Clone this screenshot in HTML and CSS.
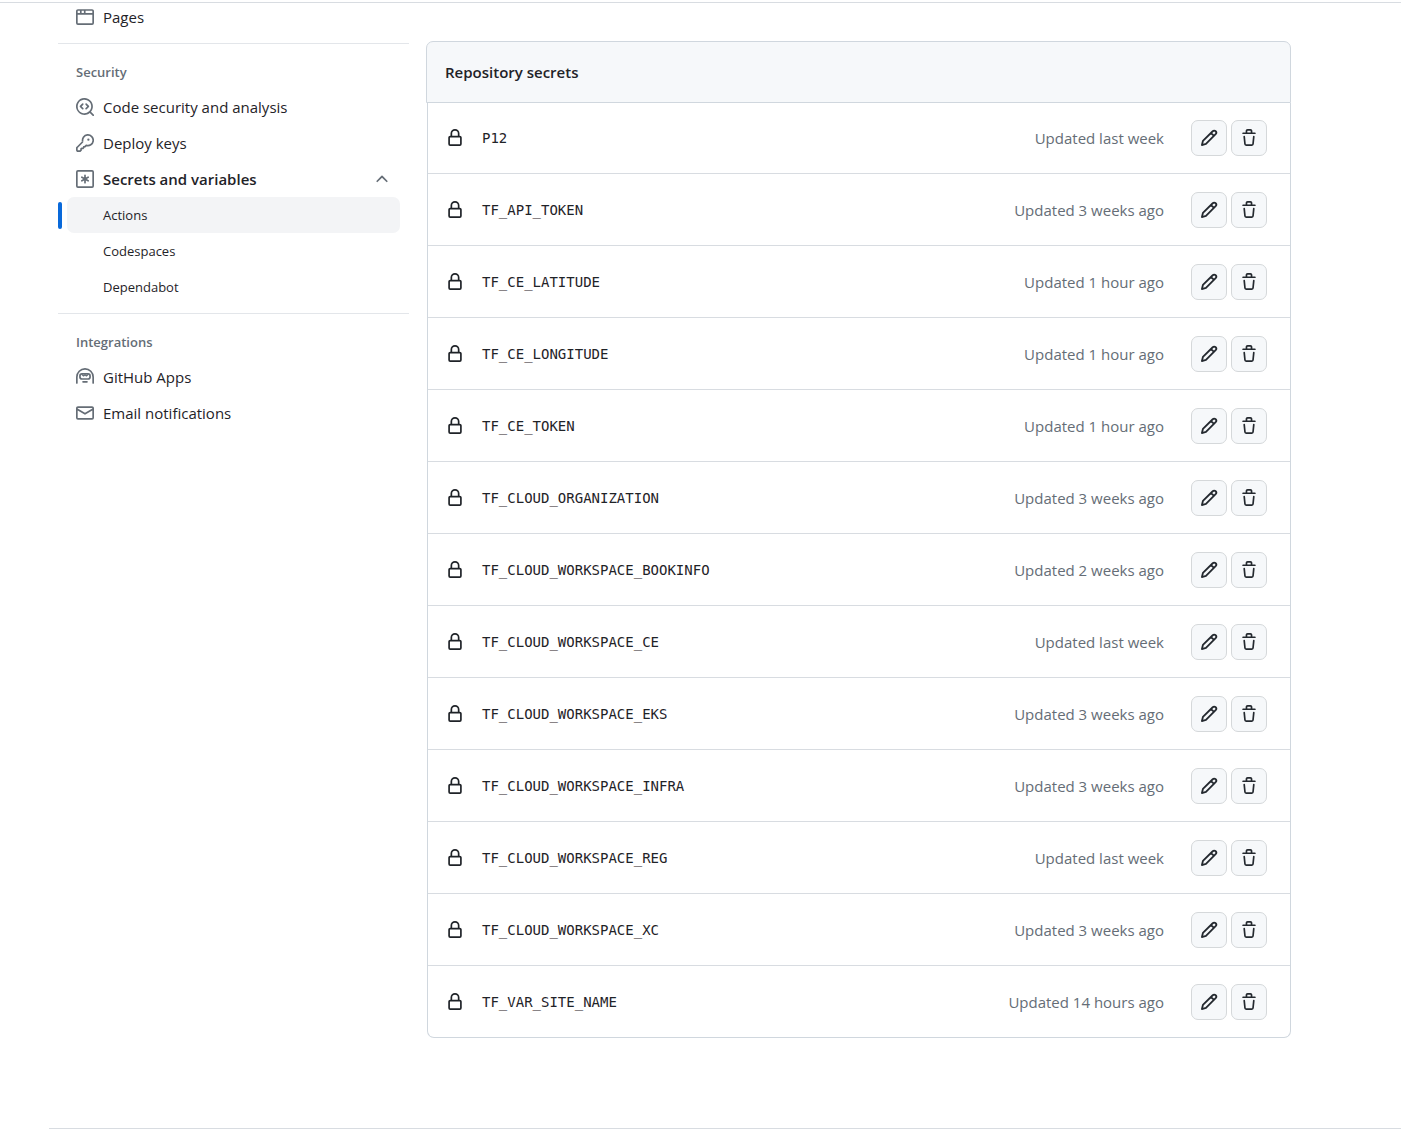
FILE: index.html
```html
<!DOCTYPE html>
<html lang="en">
<head>
<meta charset="utf-8">
<title>Actions secrets</title>
<link rel="stylesheet" href="styles.css">
</head>
<body>
<svg class="sprite" aria-hidden="true">
  <symbol id="browser" viewBox="0 0 16 16"><path d="M0 2.75C0 1.784.784 1 1.75 1h12.5c.966 0 1.75.784 1.75 1.75v10.5A1.75 1.75 0 0 1 14.25 15H1.75A1.75 1.75 0 0 1 0 13.25ZM14.5 6h-13v7.25c0 .138.112.25.25.25h12.5a.25.25 0 0 0 .25-.25Zm-6-3.5v2h6V2.75a.25.25 0 0 0-.25-.25ZM5 2.5v2h2v-2Zm-3.25 0a.25.25 0 0 0-.25.25V4.5h2v-2Z"/></symbol>
  <symbol id="codescan" viewBox="0 0 16 16"><path d="M8.47 4.97a.75.75 0 0 0 0 1.06L9.94 7.5 8.47 8.97a.75.75 0 1 0 1.06 1.06l2-2a.75.75 0 0 0 0-1.06l-2-2a.75.75 0 0 0-1.06 0ZM6.53 6.03a.75.75 0 0 0-1.06-1.06l-2 2a.75.75 0 0 0 0 1.06l2 2a.75.75 0 1 0 1.06-1.06L5.06 7.5l1.47-1.47Z"/><path d="M12.246 13.307a7.501 7.501 0 1 1 1.06-1.06l2.474 2.473a.749.749 0 0 1-.326 1.275.749.749 0 0 1-.734-.215ZM1.5 7.5a6.002 6.002 0 0 0 3.608 5.504 6.002 6.002 0 0 0 6.486-1.117.748.748 0 0 1 .292-.293A6 6 0 1 0 1.5 7.5Z"/></symbol>
  <symbol id="key" viewBox="0 0 16 16"><path d="M6 6.9L.95 12a.6.6 0 0 0-.2.5v1.75a1 1 0 0 0 1 1h1.9l.85-.85v-1.1l.6-.6h1.1l.7-.7v-.6l.5-.1h.6l1.1-1.2A4.75 4.75 0 1 0 6 6.9" fill="none" stroke="currentColor" stroke-width="1.5" stroke-linejoin="round"/><circle cx="11" cy="5" r="1"/></symbol>
  <symbol id="asterisk" viewBox="0 0 16 16"><g fill="none" stroke="currentColor" stroke-width="1.5" stroke-linecap="round"><rect x=".75" y=".75" width="14.5" height="14.5" rx="1"/><path d="M8 4.75v6.5M5.2 6.4l5.6 3.2M10.8 6.4L5.2 9.6"/></g></symbol>
  <symbol id="chevron" viewBox="0 0 16 16"><path d="M3.22 10.53a.749.749 0 0 1 0-1.06l4.25-4.25a.749.749 0 0 1 1.06 0l4.25 4.25a.749.749 0 1 1-1.06 1.06L8 6.811 4.28 10.53a.749.749 0 0 1-1.06 0Z"/></symbol>
  <symbol id="hubot" viewBox="0 0 16 16"><g fill="none" stroke="currentColor" stroke-width="1.5" stroke-linecap="round" stroke-linejoin="round"><path d="M.75 13.25V8a7.25 7.25 0 0 1 14.5 0v5.25M6.25 12.25h3.5"/><rect x="3.5" y="5.25" width="9" height="4.5" rx="1.75"/><path d="M5.5 6l1.25 1.1L8 6l1.25 1.1L10.5 6" stroke-width="1"/></g></symbol>
  <symbol id="mail" viewBox="0 0 16 16"><path d="M1.75 2h12.5c.966 0 1.75.784 1.75 1.75v8.5A1.75 1.75 0 0 1 14.25 14H1.75A1.75 1.75 0 0 1 0 12.25v-8.5C0 2.784.784 2 1.75 2ZM1.5 12.251c0 .138.112.25.25.25h12.5a.25.25 0 0 0 .25-.25V5.809L8.38 9.397a.75.75 0 0 1-.76 0L1.5 5.809v6.442Zm13-8.181v-.32a.25.25 0 0 0-.25-.25H1.75a.25.25 0 0 0-.25.25v.32L8 7.88Z"/></symbol>
  <symbol id="lock" viewBox="0 0 16 16"><path d="M4 4a4 4 0 0 1 8 0v2h.25c.966 0 1.75.784 1.75 1.75v5.5A1.75 1.75 0 0 1 12.25 15h-8.5A1.75 1.75 0 0 1 2 13.25v-5.5C2 6.784 2.784 6 3.75 6H4Zm8.25 3.5h-8.5a.25.25 0 0 0-.25.25v5.5c0 .138.112.25.25.25h8.5a.25.25 0 0 0 .25-.25v-5.5a.25.25 0 0 0-.25-.25ZM10.5 6V4a2.5 2.5 0 1 0-5 0v2Z"/></symbol>
  <symbol id="pencil" viewBox="0 0 16 16"><path d="M1.7 14.3l.9-3.7 8.7-8.6a1.8 1.8 0 0 1 2.6 2.6L5.3 13.3ZM9.9 3.6l2.5 2.5" fill="none" stroke="currentColor" stroke-width="1.6" stroke-linejoin="round"/></symbol>
  <symbol id="trash" viewBox="0 0 16 16"><path d="M11 1.75V3h2.25a.75.75 0 0 1 0 1.5H2.75a.75.75 0 0 1 0-1.5H5V1.75C5 .784 5.784 0 6.75 0h2.5C10.216 0 11 .784 11 1.75ZM4.496 6.675l.66 6.6a.25.25 0 0 0 .249.225h5.19a.25.25 0 0 0 .249-.225l.66-6.6a.75.75 0 0 1 1.492.149l-.66 6.6A1.748 1.748 0 0 1 10.595 15h-5.19a1.75 1.75 0 0 1-1.741-1.575l-.66-6.6a.75.75 0 1 1 1.492-.15ZM6.5 1.75V3h3V1.75a.25.25 0 0 0-.25-.25h-2.5a.25.25 0 0 0-.25.25Z"/></symbol>
</svg>
<div class="page">
  <nav class="sidebar" aria-label="Settings">
    <ul class="nav-list">
      <li><a class="nav-item" href="#"><svg class="icon"><use href="#browser"/></svg>Pages</a></li>
    </ul>
    <h2 class="nav-heading">Security</h2>
    <ul class="nav-list">
      <li><a class="nav-item" href="#"><svg class="icon"><use href="#codescan"/></svg>Code security and analysis</a></li>
      <li><a class="nav-item" href="#"><svg class="icon"><use href="#key"/></svg>Deploy keys</a></li>
      <li>
        <button class="nav-item nav-toggle" type="button" aria-expanded="true"><svg class="icon"><use href="#asterisk"/></svg>Secrets and variables<svg class="icon chevron"><use href="#chevron"/></svg></button>
        <ul class="nav-list">
          <li><a class="nav-item nav-sub current" href="#" aria-current="page">Actions</a></li>
          <li><a class="nav-item nav-sub" href="#">Codespaces</a></li>
          <li><a class="nav-item nav-sub" href="#">Dependabot</a></li>
        </ul>
      </li>
    </ul>
    <h2 class="nav-heading">Integrations</h2>
    <ul class="nav-list">
      <li><a class="nav-item" href="#"><svg class="icon"><use href="#hubot"/></svg>GitHub Apps</a></li>
      <li><a class="nav-item" href="#"><svg class="icon"><use href="#mail"/></svg>Email notifications</a></li>
    </ul>
  </nav>
  <main class="content">
    <h2 class="box-header">Repository secrets</h2>
    <table class="secrets">
      <tbody>
        <tr><td class="lock"><svg class="icon"><use href="#lock"/></svg></td><th class="name" scope="row">P12</th><td class="updated">Updated last week</td><td class="actions"><div class="buttons"><button class="btn" type="button" aria-label="Edit P12"><svg class="icon"><use href="#pencil"/></svg></button><button class="btn" type="button" aria-label="Delete P12"><svg class="icon"><use href="#trash"/></svg></button></div></td></tr>
        <tr><td class="lock"><svg class="icon"><use href="#lock"/></svg></td><th class="name" scope="row">TF_API_TOKEN</th><td class="updated">Updated 3 weeks ago</td><td class="actions"><div class="buttons"><button class="btn" type="button" aria-label="Edit TF_API_TOKEN"><svg class="icon"><use href="#pencil"/></svg></button><button class="btn" type="button" aria-label="Delete TF_API_TOKEN"><svg class="icon"><use href="#trash"/></svg></button></div></td></tr>
        <tr><td class="lock"><svg class="icon"><use href="#lock"/></svg></td><th class="name" scope="row">TF_CE_LATITUDE</th><td class="updated">Updated 1 hour ago</td><td class="actions"><div class="buttons"><button class="btn" type="button" aria-label="Edit TF_CE_LATITUDE"><svg class="icon"><use href="#pencil"/></svg></button><button class="btn" type="button" aria-label="Delete TF_CE_LATITUDE"><svg class="icon"><use href="#trash"/></svg></button></div></td></tr>
        <tr><td class="lock"><svg class="icon"><use href="#lock"/></svg></td><th class="name" scope="row">TF_CE_LONGITUDE</th><td class="updated">Updated 1 hour ago</td><td class="actions"><div class="buttons"><button class="btn" type="button" aria-label="Edit TF_CE_LONGITUDE"><svg class="icon"><use href="#pencil"/></svg></button><button class="btn" type="button" aria-label="Delete TF_CE_LONGITUDE"><svg class="icon"><use href="#trash"/></svg></button></div></td></tr>
        <tr><td class="lock"><svg class="icon"><use href="#lock"/></svg></td><th class="name" scope="row">TF_CE_TOKEN</th><td class="updated">Updated 1 hour ago</td><td class="actions"><div class="buttons"><button class="btn" type="button" aria-label="Edit TF_CE_TOKEN"><svg class="icon"><use href="#pencil"/></svg></button><button class="btn" type="button" aria-label="Delete TF_CE_TOKEN"><svg class="icon"><use href="#trash"/></svg></button></div></td></tr>
        <tr><td class="lock"><svg class="icon"><use href="#lock"/></svg></td><th class="name" scope="row">TF_CLOUD_ORGANIZATION</th><td class="updated">Updated 3 weeks ago</td><td class="actions"><div class="buttons"><button class="btn" type="button" aria-label="Edit TF_CLOUD_ORGANIZATION"><svg class="icon"><use href="#pencil"/></svg></button><button class="btn" type="button" aria-label="Delete TF_CLOUD_ORGANIZATION"><svg class="icon"><use href="#trash"/></svg></button></div></td></tr>
        <tr><td class="lock"><svg class="icon"><use href="#lock"/></svg></td><th class="name" scope="row">TF_CLOUD_WORKSPACE_BOOKINFO</th><td class="updated">Updated 2 weeks ago</td><td class="actions"><div class="buttons"><button class="btn" type="button" aria-label="Edit TF_CLOUD_WORKSPACE_BOOKINFO"><svg class="icon"><use href="#pencil"/></svg></button><button class="btn" type="button" aria-label="Delete TF_CLOUD_WORKSPACE_BOOKINFO"><svg class="icon"><use href="#trash"/></svg></button></div></td></tr>
        <tr><td class="lock"><svg class="icon"><use href="#lock"/></svg></td><th class="name" scope="row">TF_CLOUD_WORKSPACE_CE</th><td class="updated">Updated last week</td><td class="actions"><div class="buttons"><button class="btn" type="button" aria-label="Edit TF_CLOUD_WORKSPACE_CE"><svg class="icon"><use href="#pencil"/></svg></button><button class="btn" type="button" aria-label="Delete TF_CLOUD_WORKSPACE_CE"><svg class="icon"><use href="#trash"/></svg></button></div></td></tr>
        <tr><td class="lock"><svg class="icon"><use href="#lock"/></svg></td><th class="name" scope="row">TF_CLOUD_WORKSPACE_EKS</th><td class="updated">Updated 3 weeks ago</td><td class="actions"><div class="buttons"><button class="btn" type="button" aria-label="Edit TF_CLOUD_WORKSPACE_EKS"><svg class="icon"><use href="#pencil"/></svg></button><button class="btn" type="button" aria-label="Delete TF_CLOUD_WORKSPACE_EKS"><svg class="icon"><use href="#trash"/></svg></button></div></td></tr>
        <tr><td class="lock"><svg class="icon"><use href="#lock"/></svg></td><th class="name" scope="row">TF_CLOUD_WORKSPACE_INFRA</th><td class="updated">Updated 3 weeks ago</td><td class="actions"><div class="buttons"><button class="btn" type="button" aria-label="Edit TF_CLOUD_WORKSPACE_INFRA"><svg class="icon"><use href="#pencil"/></svg></button><button class="btn" type="button" aria-label="Delete TF_CLOUD_WORKSPACE_INFRA"><svg class="icon"><use href="#trash"/></svg></button></div></td></tr>
        <tr><td class="lock"><svg class="icon"><use href="#lock"/></svg></td><th class="name" scope="row">TF_CLOUD_WORKSPACE_REG</th><td class="updated">Updated last week</td><td class="actions"><div class="buttons"><button class="btn" type="button" aria-label="Edit TF_CLOUD_WORKSPACE_REG"><svg class="icon"><use href="#pencil"/></svg></button><button class="btn" type="button" aria-label="Delete TF_CLOUD_WORKSPACE_REG"><svg class="icon"><use href="#trash"/></svg></button></div></td></tr>
        <tr><td class="lock"><svg class="icon"><use href="#lock"/></svg></td><th class="name" scope="row">TF_CLOUD_WORKSPACE_XC</th><td class="updated">Updated 3 weeks ago</td><td class="actions"><div class="buttons"><button class="btn" type="button" aria-label="Edit TF_CLOUD_WORKSPACE_XC"><svg class="icon"><use href="#pencil"/></svg></button><button class="btn" type="button" aria-label="Delete TF_CLOUD_WORKSPACE_XC"><svg class="icon"><use href="#trash"/></svg></button></div></td></tr>
        <tr><td class="lock"><svg class="icon"><use href="#lock"/></svg></td><th class="name" scope="row">TF_VAR_SITE_NAME</th><td class="updated">Updated 14 hours ago</td><td class="actions"><div class="buttons"><button class="btn" type="button" aria-label="Edit TF_VAR_SITE_NAME"><svg class="icon"><use href="#pencil"/></svg></button><button class="btn" type="button" aria-label="Delete TF_VAR_SITE_NAME"><svg class="icon"><use href="#trash"/></svg></button></div></td></tr>
      </tbody>
    </table>
  </main>
</div>
<footer class="footer"></footer>
</body>
</html>
```
FILE: styles.css
```css
* { box-sizing: border-box; }

body {
  margin: 0;
  padding-top: 2px;
  background: #fff;
  color: #1f2328;
  font: 15px/24px "Open Sans", "Noto Sans", sans-serif;
}

.sprite { display: none; }

.icon {
  display: block;
  flex: none;
  width: 18px;
  height: 18px;
  fill: currentColor;
}

.page {
  display: flex;
  gap: 18px;
  padding: 0 110px 0 58px;
  border-top: 1px solid #d8dce1;
}

/* Sidebar */

.sidebar {
  flex: none;
  width: 351px;
  margin-top: -4px;
}

.nav-list {
  margin: 0;
  padding: 0;
  list-style: none;
}

.nav-item {
  display: flex;
  align-items: center;
  gap: 9px;
  width: 333px;
  height: 36px;
  margin-left: 9px;
  padding: 0 9px;
  border: 0;
  border-radius: 7px;
  background: none;
  color: #1f2328;
  font: inherit;
  text-decoration: none;
}

.nav-item .icon { color: #656d76; }

.nav-toggle { font-weight: 600; }

.nav-toggle .chevron { margin-left: auto; }

.nav-sub {
  padding-left: 36px;
  font-size: 13px;
}

.current {
  position: relative;
  background: #f3f4f6;
}

.current::before {
  content: "";
  position: absolute;
  top: 5px;
  left: -9px;
  width: 4px;
  height: 27px;
  border-radius: 4px;
  background: #0969da;
}

.nav-heading {
  margin: 8px 0 0;
  padding: 18px 18px 7px;
  border-top: 1px solid #e3e6ea;
  color: #656d76;
  font-size: 13px;
  font-weight: 600;
  line-height: 20px;
}

/* Secrets box */

.content {
  flex: 1;
  min-width: 0;
  padding-top: 38px;
}

.box-header {
  margin: 0 0 0 -1px;
  padding: 18px;
  border: 1px solid #d0d7de;
  border-radius: 7px 7px 0 0;
  background: #f6f8fa;
  font-size: 15px;
  font-weight: 600;
  line-height: 24px;
}

.secrets {
  width: 100%;
  border: 1px solid #d0d7de;
  border-top: 0;
  border-radius: 0 0 7px 7px;
  border-spacing: 0;
}

.secrets td,
.secrets th {
  height: 72px;
  padding: 0;
  border-bottom: 1px solid #d8dce1;
}

.secrets tr:first-child > *,
.secrets tr:last-child > * { height: 71px; }

.secrets tr:last-child > * { border-bottom: 0; }

.secrets .lock {
  width: 54px;
  padding-left: 18px;
}

.secrets .name {
  font: 14px/24px "DejaVu Sans Mono", monospace;
  text-align: left;
}

.secrets .updated {
  color: #656d76;
  text-align: right;
  white-space: nowrap;
}

.secrets .actions {
  width: 126px;
  padding-right: 23px;
}

.buttons {
  display: flex;
  justify-content: flex-end;
  gap: 4px;
}

.btn {
  display: flex;
  align-items: center;
  justify-content: center;
  width: 36px;
  height: 36px;
  padding: 0;
  border: 1px solid #d5d8da;
  border-radius: 7px;
  background: #f6f8fa;
  color: #24292f;
}

.footer {
  height: 8px;
  margin: 90px 0 0 49px;
  border-top: 1px solid #d8dce1;
}
```
